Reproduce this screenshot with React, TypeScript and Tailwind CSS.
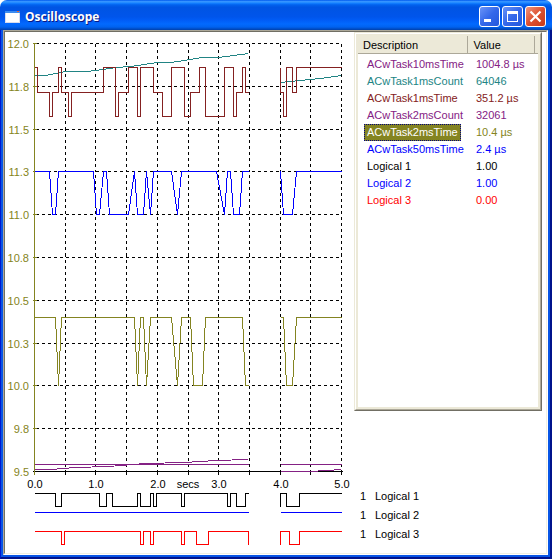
import React from "react";

type Point = [number, number];

const MAROON = "#842121";
const TEAL = "#218484";
const PURPLE = "#842184";
const OLIVE = "#848421";
const BLUE = "#0000ff";
const RED = "#ff0000";
const BLACK = "#000000";

const gridX = [65, 95, 126, 157, 188, 218, 249, 280, 310, 341];
const gridY: [number, string][] = [
  [43, "12.0"],
  [86, "11.8"],
  [129, "11.5"],
  [171, "11.3"],
  [214, "11.0"],
  [257, "10.8"],
  [300, "10.5"],
  [343, "10.3"],
  [385, "10.0"],
  [428, "9.8"],
  [471, "9.5"],
];
const timeLabels: [number, string][] = [
  [35, "0.0"],
  [96, "1.0"],
  [158, "2.0"],
  [188, "secs"],
  [219, "3.0"],
  [281, "4.0"],
  [342, "5.0"],
];

/* A square wave: the start x, then pairs of [level, x where that level ends]. */
function square(start: number, steps: Point[]): Point[] {
  const out: Point[] = [];
  let x = start;
  for (const [level, end] of steps) {
    out.push([x, level], [end, level]);
    x = end;
  }
  return out;
}

const traces: { color: string; points: Point[] }[] = [
  { color: TEAL, points: [[34, 75], [45, 75], [65, 71], [87, 71], [95, 70], [116, 67], [130, 66], [157, 62], [170, 62], [184, 60], [201, 57], [218, 57], [248, 53]] },
  { color: TEAL, points: [[280, 82], [290, 81], [300, 80], [320, 78], [341, 75]] },
  {
    color: MAROON,
    points: square(34, [
      [67, 37], [92, 49], [116, 52], [92, 58], [67, 61], [92, 68], [116, 71], [92, 103], [67, 115],
      [116, 118], [92, 128], [67, 137], [116, 140], [67, 153], [92, 162], [116, 171], [67, 184],
      [116, 190], [92, 199], [67, 205], [116, 224], [67, 233], [116, 236], [92, 242], [67, 245], [92, 248],
    ]),
  },
  { color: MAROON, points: square(280, [[67, 280], [92, 283], [116, 286], [67, 292], [92, 296], [67, 341]]) },
  {
    color: BLUE,
    points: [
      [34, 171], [49, 171], [52, 214], [55, 214], [58, 171], [93, 171], [96, 214], [99, 214], [103, 171],
      [106, 171], [109, 214], [128, 214], [134, 171], [137, 214], [143, 214], [146, 171], [150, 214],
      [153, 171], [171, 171], [177, 214], [181, 171], [216, 171], [224, 214], [227, 171], [230, 171],
      [233, 214], [239, 214], [242, 171], [248, 171],
    ],
  },
  { color: BLUE, points: [[280, 171], [283, 214], [292, 214], [296, 171], [341, 171]] },
  {
    color: OLIVE,
    points: [
      [34, 317], [55, 317], [58, 385], [61, 317], [134, 317], [137, 385], [140, 317], [143, 317],
      [146, 385], [150, 317], [171, 317], [177, 385], [181, 317], [190, 317], [193, 385], [202, 385],
      [205, 317], [242, 317], [245, 385], [248, 385],
    ],
  },
  { color: OLIVE, points: [[280, 317], [283, 317], [286, 385], [292, 385], [296, 317], [341, 317]] },
  { color: PURPLE, points: [[34, 464], [248, 464]] },
  { color: PURPLE, points: [[280, 464], [341, 464]] },
  { color: PURPLE, points: [[34, 469], [51, 469], [75, 467], [108, 466], [145, 463], [184, 462], [215, 460], [248, 459]] },
  { color: PURPLE, points: [[280, 471], [310, 471], [341, 469]] },
];

const logicals: { name: string; color: string; parts: Point[][] }[] = [
  {
    name: "Logical 1",
    color: BLACK,
    parts: [
      square(34, [
        [5, 55], [18, 61], [5, 99], [18, 106], [5, 112], [18, 137], [5, 140], [18, 150], [5, 153],
        [18, 156], [5, 181], [18, 184], [5, 227], [18, 230], [5, 236], [18, 245], [5, 248],
      ]),
      square(280, [[18, 280], [5, 286], [18, 299], [5, 341]]),
    ],
  },
  { name: "Logical 2", color: BLUE, parts: [[[34, 5], [248, 5]], [[280, 5], [341, 5]]] },
  {
    name: "Logical 3",
    color: RED,
    parts: [
      square(34, [
        [5, 61], [18, 64], [5, 140], [18, 143], [5, 150], [18, 153], [5, 181], [18, 184],
        [5, 196], [18, 208], [5, 248], [18, 248],
      ]),
      square(280, [[18, 280], [5, 289], [18, 299], [5, 341]]),
    ],
  },
];

const rows = [
  { name: "ACwTask10msTime", value: "1004.8 µs", tone: "text-[#842184]" },
  { name: "ACwTask1msCount", value: "64046", tone: "text-[#218484]" },
  { name: "ACwTask1msTime", value: "351.2 µs", tone: "text-[#842121]" },
  { name: "ACwTask2msCount", value: "32061", tone: "text-[#842184]" },
  { name: "ACwTask2msTime", value: "10.4 µs", tone: "text-[#848421]", selected: true },
  { name: "ACwTask50msTime", value: "2.4 µs", tone: "text-[#0000ff]" },
  { name: "Logical 1", value: "1.00", tone: "text-black" },
  { name: "Logical 2", value: "1.00", tone: "text-[#0000ff]" },
  { name: "Logical 3", value: "0.00", tone: "text-[#ff0000]" },
];

const join = (points: Point[]) => points.map((p) => p.join(",")).join(" ");

function Chart() {
  return (
    <svg className="block shrink-0 overflow-visible" width="349" height="456" viewBox="5 32 349 456" role="img" aria-label="Task timing chart">
      <g transform="translate(0.5 0.5)" fill="none" strokeWidth="1" shapeRendering="crispEdges">
        {gridY.slice(0, -1).map(([y]) => (
          <line key={y} x1="35" x2="341" y1={y} y2={y} stroke={BLACK} strokeDasharray="3 3" />
        ))}
        {gridX.map((x) => (
          <line key={x} x1={x} x2={x} y1="43" y2="471" stroke={BLACK} strokeDasharray="3 3" />
        ))}
        {gridX.map((x) => (
          <line key={x} x1={x} x2={x} y1="469" y2="474" stroke={BLACK} />
        ))}
        <line x1="32" x2="342" y1="471" y2="471" stroke={BLACK} />
        {gridY.slice(0, -1).map(([y]) => (
          <line key={y} x1="32" x2="36" y1={y} y2={y} stroke={OLIVE} />
        ))}
        <line x1="34" x2="34" y1="43" y2="474" stroke={OLIVE} />
        {traces.map((t, i) => (
          <polyline key={i} points={join(t.points)} stroke={t.color} />
        ))}
      </g>
      <g className="text-[11px]" fill={OLIVE} textAnchor="end">
        {gridY.map(([y, label]) => (
          <text key={label} x="29" y={y + 5}>{label}</text>
        ))}
      </g>
      <g className="text-[11px]" fill={BLACK} textAnchor="middle">
        {timeLabels.map(([x, label]) => (
          <text key={label} x={x} y="488">{label}</text>
        ))}
      </g>
    </svg>
  );
}

function LogicalTrace({ name, color, parts }: (typeof logicals)[number]) {
  return (
    <div className="flex h-[19px] items-start leading-4">
      <svg className="block shrink-0" width="349" height="19" viewBox="5 0 349 19" aria-hidden="true">
        <g transform="translate(0.5 0.5)" fill="none" stroke={color} shapeRendering="crispEdges">
          {parts.map((p, i) => (
            <polyline key={i} points={join(p)} />
          ))}
        </g>
      </svg>
      <span className="w-[21px] pl-1.5">1</span>
      <span>{name}</span>
    </div>
  );
}

function ValueList() {
  return (
    <section className="mr-1 h-[379px] flex-1 border border-t-[#ece9d8] border-r-[#716f64] border-b-[#716f64] border-l-[#ece9d8]">
      <div className="h-full border border-t-white border-r-[#aca899] border-b-[#aca899] border-l-white">
        <div className="h-full border-2 border-[#ece9d8] bg-white">
          <table className="w-full table-fixed border-collapse text-left">
            <colgroup>
              <col className="w-[109px]" />
              <col className="w-[67px]" />
              <col />
            </colgroup>
            <thead>
              <tr className="h-4 border-b border-[#aca899] bg-[#ece9d8] leading-[15px]">
                <th className="border-r border-[#aca899] p-0 pt-0.5 pl-[5px] font-normal">Description</th>
                <th className="border-r border-l border-r-[#aca899] border-l-[#aca899] p-0 pt-0.5 pl-1.5 font-normal">Value</th>
                <td className="p-0" />
              </tr>
              <tr className="h-0.5" aria-hidden="true" />
            </thead>
            <tbody>
              {rows.map((r) => (
                <tr key={r.name} className={`h-[17px] leading-[15px] ${r.tone}`}>
                  <td className="p-0 pl-1.5 whitespace-nowrap">
                    <span
                      className={
                        r.selected
                          ? "inline-block border border-dotted border-[#000084] bg-[#848421] px-0.5 text-white"
                          : "inline-block border border-transparent px-0.5"
                      }
                    >
                      {r.name}
                    </span>
                  </td>
                  <td className="p-0 pl-[9px] whitespace-nowrap">{r.value}</td>
                  <td className="p-0" />
                </tr>
              ))}
            </tbody>
          </table>
        </div>
      </div>
    </section>
  );
}

function TitleBar() {
  const blue = "bg-[linear-gradient(135deg,#6a94f8,#3468ea_50%,#2458dc)]";
  const red = "bg-[linear-gradient(135deg,#f0957c,#dd5030_50%,#c83a18)]";
  const button = "h-[21px] w-[21px] rounded-[3px] border border-white";
  return (
    <header className="flex h-[30px] items-center rounded-t-[7px] bg-[linear-gradient(to_bottom,#0058ee_0%,#3593ff_5%,#288eff_8%,#127dff_11%,#0262ee_16%,#0054e3_24%,#0055eb_56%,#005bf5_66%,#026afe_80%,#0062ef_90%,#0040ab_100%)] pt-[3px] pr-[6px] pl-[5px]">
      <svg className="mr-[5px]" width="15" height="12" viewBox="0 0 15 12" shapeRendering="crispEdges" aria-hidden="true">
        <rect width="15" height="12" fill="#d8dcec" />
        <rect width="15" height="2" fill="#3c8cf0" />
        <rect x="12" width="2" height="1" fill="#f06030" />
        <rect x="1" y="2" width="13" height="9" fill="#fff" />
      </svg>
      <h1 className="flex-1 font-['Open_Sans',sans-serif] text-[12px] leading-4 font-bold text-white [text-shadow:1px_1px_0_#0a1883]">Oscilloscope</h1>
      <div className="flex gap-0.5">
        <button type="button" aria-label="Minimize" className={`${button} ${blue}`}>
          <svg width="19" height="19" viewBox="0 0 19 19" aria-hidden="true">
            <rect x="4" y="12" width="7" height="3" fill="#fff" />
          </svg>
        </button>
        <button type="button" aria-label="Maximize" className={`${button} ${blue}`}>
          <svg width="19" height="19" viewBox="0 0 19 19" aria-hidden="true">
            <path d="M4 4h11v11H4zM5 7v7h9V7z" fill="#fff" fillRule="evenodd" />
          </svg>
        </button>
        <button type="button" aria-label="Close" className={`${button} ${red}`}>
          <svg width="19" height="19" viewBox="0 0 19 19" aria-hidden="true">
            <path d="M4.500 4.500l10 10M14.500 4.500l-10 10" stroke="#fff" strokeWidth="2.200" />
          </svg>
        </button>
      </div>
    </header>
  );
}

export default function App() {
  return (
    <main className="bg-white font-['Liberation_Sans',Arial,sans-serif] text-[11px] text-black">
      <TitleBar />
      <div className="border-r-2 border-b-2 border-l border-r-[#00138c] border-b-[#00138c] border-l-[#0019cf] bg-[#0855e5] pr-0.5 pb-0.5 pl-0.5">
        <div className="border border-t-[#aca899] border-r-white border-b-white border-l-[#aca899]">
          <div className="border border-t-[#716f64] border-r-[#f1efe2] border-b-[#f1efe2] border-l-[#716f64] bg-white pb-2">
            <div className="flex items-start">
              <Chart />
              <ValueList />
            </div>
            {logicals.map((l) => (
              <LogicalTrace key={l.name} {...l} />
            ))}
          </div>
        </div>
      </div>
    </main>
  );
}
